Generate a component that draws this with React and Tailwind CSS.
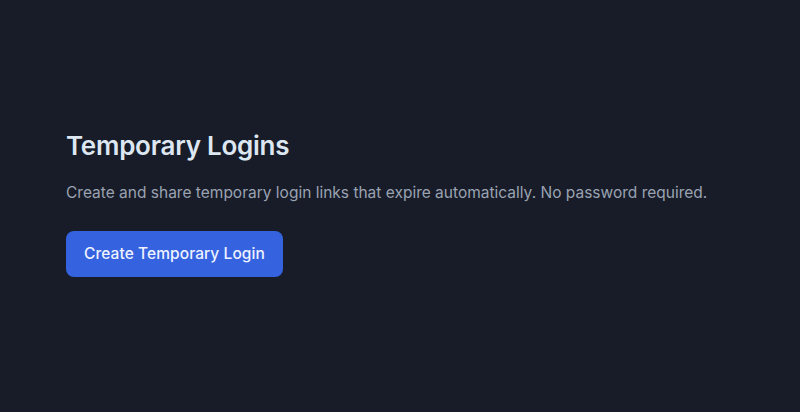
export default function App() {
  return (
    <div className="min-h-[412px] w-full bg-[#181c28] flex items-center px-[66px] pb-[6px]" style={{ fontFamily: "Inter, 'Noto Sans', sans-serif" }}>
      <div className="flex flex-col items-start">
        <h1 className="text-[26px] leading-[32px] font-semibold text-[#dde7f2] tracking-[-0.01em]">Temporary Logins</h1>
        <p className="mt-[19px] text-[15.5px] leading-[24px] text-[#9aa3b2]">Create and share temporary login links that expire automatically. No password required.</p>
        <button className="mt-[26px] h-[46px] px-[18px] rounded-[8px] bg-[#3563e0] text-[#eef2ff] text-[15.5px] font-medium tracking-[0.005em]">Create Temporary Login</button>
      </div>
    </div>
  );
}
